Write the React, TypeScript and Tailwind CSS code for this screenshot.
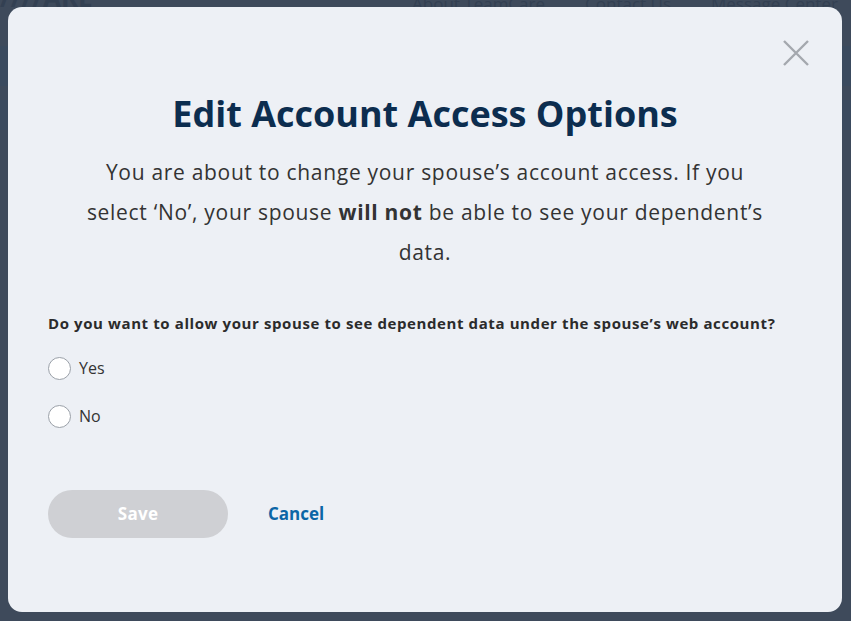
import React from "react";

export default function App() {
  return (
    <div className="relative w-[851px] h-[621px] overflow-hidden bg-[#3e4a5b]" style={{ fontFamily: "'Open Sans', 'Noto Sans', sans-serif" }}>
      {/* faint background page */}
      <div className="absolute inset-0 text-[#334052]">
        <div className="absolute left-0 top-[-16px] text-[26px] font-bold leading-none">////ARE</div>
        <div className="absolute left-[412px] top-[-8px] text-[17px] leading-[24px] flex gap-[40px]">
          <span>About TeamCare</span>
          <span>Contact Us</span>
          <span>Message Center</span>
        </div>
        <div className="absolute left-0 top-[46px] w-full h-[40px] bg-[#3a4a5e]" />
        <div className="absolute left-0 top-[100px] w-full h-[30px] bg-[#3a4a5e]" />
      </div>

      <div className="absolute left-[8px] top-[7px] w-[834px] h-[605px] rounded-[14px] bg-[#edf0f5] px-10">
        <button className="absolute right-[33px] top-[33px] w-[26px] h-[26px]" aria-label="Close">
          <svg viewBox="0 0 26 26" className="w-[26px] h-[26px]">
            <path d="M1 1 L25 25 M25 1 L1 25" stroke="#a4a8ae" strokeWidth="2.4" fill="none" />
          </svg>
        </button>

        <h1 className="pt-[84px] text-center text-[36px] font-bold text-[#0c2d4f] leading-[46px]">
          Edit Account Access Options
        </h1>
        <p className="mt-[15px] mx-auto w-[696px] text-center text-[21px] tracking-[0.7px] leading-[40px] text-[#333333]">
          You are about to change your spouse’s account access. If you select ‘No’, your spouse <b className="font-bold">will not</b> be able to see your dependent’s data.
        </p>

        <p className="mt-[41px] text-[15px] tracking-[0.6px] font-bold text-[#2b2b2b] leading-[20px]">
          Do you want to allow your spouse to see dependent data under the spouse’s web account?
        </p>

        <div className="mt-[24px] flex flex-col gap-[26px]">
          {["Yes", "No"].map((l) => (
            <label key={l} className="flex items-center gap-[8px] h-[22px]">
              <span className="w-[23px] h-[23px] rounded-full bg-white border border-[#9aa0a8]" />
              <span className="text-[16px] text-[#333333]">{l}</span>
            </label>
          ))}
        </div>

        <div className="mt-[63px] flex items-center gap-[40px]">
          <button className="w-[180px] h-[48px] rounded-full bg-[#cfd0d4] text-white text-[17px] tracking-[0.3px] font-bold">Save</button>
          <button className="text-[17px] font-bold text-[#0b66a6]">Cancel</button>
        </div>
      </div>
    </div>
  );
}
